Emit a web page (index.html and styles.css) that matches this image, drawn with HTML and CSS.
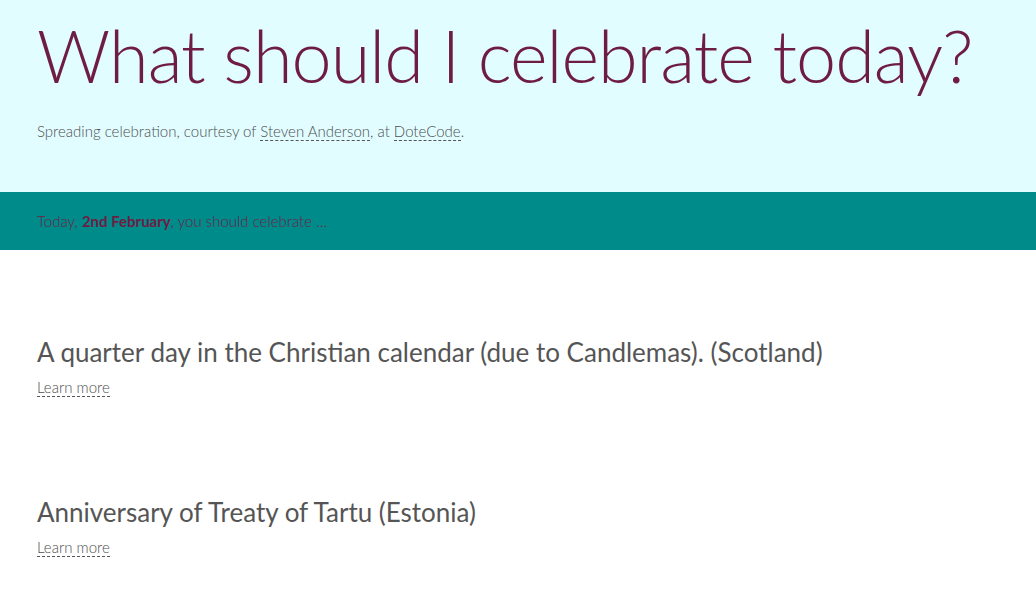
FILE: index.html
```html
<!DOCTYPE html>
<html lang="en">
<head>
<meta charset="utf-8">
<title>What should I celebrate today?</title>
<link rel="stylesheet" href="styles.css">
</head>
<body>
<header class="hero">
  <h1 class="hero-title">What should I celebrate today?</h1>
  <p class="hero-sub">Spreading celebration, courtesy of <a class="dotted" href="#">Steven Anderson</a>, at <a class="dotted" href="#">DoteCode</a>.</p>
</header>
<div class="band">
  <p class="band-text">Today, <strong>2nd February</strong>, you should celebrate …</p>
</div>
<main class="list">
  <section class="item">
    <h2 class="item-title">A quarter day in the Christian calendar (due to Candlemas). (Scotland)</h2>
    <p class="item-link"><a class="dotted" href="#">Learn more</a></p>
  </section>
  <section class="item">
    <h2 class="item-title">Anniversary of Treaty of Tartu (Estonia)</h2>
    <p class="item-link"><a class="dotted" href="#">Learn more</a></p>
  </section>
</main>
</body>
</html>
```
FILE: styles.css
```css
html, body {
  margin: 0;
  padding: 0;
  background: #ffffff;
  font-family: "Lato", "Open Sans", "Liberation Sans", sans-serif;
  color: #555555;
}
.hero {
  background: #e1fdff;
  padding: 15px 37px 51px;
}
.hero-title {
  margin: 0;
  font-weight: 300;
  font-size: 72px;
  line-height: 80px;
  letter-spacing: -1px;
  color: #6f1c43;
  white-space: nowrap;
}
.hero-sub {
  margin: 26px 0 0;
  font-size: 15px;
  font-weight: 300;
  color: #4f4f4f;
  line-height: 20px;
}
.dotted {
  color: inherit;
  text-decoration: none;
  border-bottom: 1px dashed #555555;
}
.band {
  background: #008b8b;
  height: 58px;
  display: flex;
  align-items: center;
  padding: 0 37px;
}
.band-text {
  margin: 0;
  font-size: 15px;
  line-height: 18px;
  font-weight: 300;
  color: #6f1c43;
}
.band-text strong {
  font-weight: 700;
}
.list {
  padding: 86px 37px 40px;
}
.item {
  margin-bottom: 100px;
}
.item:last-child {
  margin-bottom: 0;
}
.item-title {
  margin: 0;
  font-size: 26px;
  font-weight: 400;
  line-height: 32px;
  color: #555555;
}
.item-link {
  margin: 10px 0 0;
  font-size: 15px;
  font-weight: 300;
  line-height: 18px;
  color: #4f4f4f;
}
```
